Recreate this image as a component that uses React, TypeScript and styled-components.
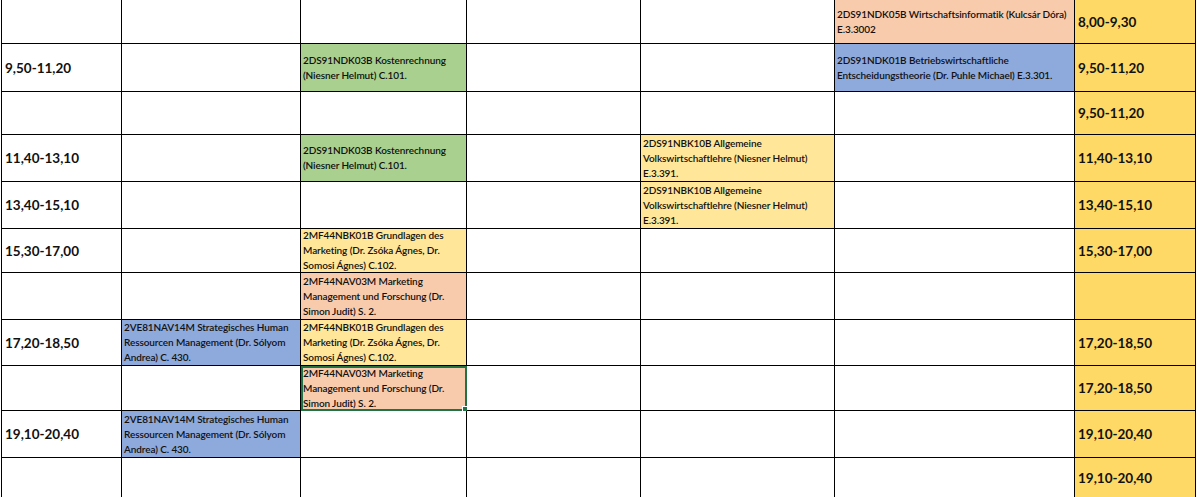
import React from "react";
import styled, { createGlobalStyle } from "styled-components";

const Global = createGlobalStyle`
  body { margin: 0; background: #fff; font-family: Lato, "Noto Sans", sans-serif; }
`;

type Fill = "green" | "peach" | "blue" | "yellow" | "gold" | "none";
const fills: Record<Fill, string> = {
  green: "#a9d08e", peach: "#f8cbad", blue: "#8ea9db", yellow: "#ffe699", gold: "#ffd966", none: "#fff",
};

const Grid = styled.div`
  display: grid;
  grid-template-columns: 120px 179px 166px 174px 194px 240px 121px;
  grid-template-rows: 44px 48px 43px 47px 47px 44px 47px 46px 45px 47px 40px;
  width: max-content;
  border-left: 1px solid #000;
  margin-left: 1px;
`;

const Cell = styled.div<{ $fill: Fill; $time?: boolean; $sel?: boolean }>`
  background: ${(p) => fills[p.$fill]};
  border-right: 1px solid #000;
  border-bottom: 1px solid #000;
  display: flex;
  align-items: center;
  padding: 0 ${(p) => (p.$time ? "3px" : "2px")};
  font-size: ${(p) => (p.$time ? "13.5px" : "10px")};
  font-weight: ${(p) => (p.$time ? 700 : 600)};
  line-height: ${(p) => (p.$time ? "16px" : "15px")};
  color: #111;
  letter-spacing: ${(p) => (p.$time ? "0" : "-0.1px")};
  position: relative;
  box-sizing: border-box;
  overflow: hidden;
  ${(p) => p.$sel && `outline: 2px solid #217346; outline-offset: -2px; overflow: visible;`}
`;

const Handle = styled.span`
  position: absolute;
  right: -3px;
  bottom: -3px;
  width: 5px;
  height: 5px;
  background: #217346;
  border: 1px solid #fff;
`;

const T = {
  wi: "2DS91NDK05B Wirtschaftsinformatik (Kulcsár Dóra) E.3.3002",
  kr: "2DS91NDK03B Kostenrechnung (Niesner Helmut) C.101.",
  bw: "2DS91NDK01B Betriebswirtschaftliche Entscheidungstheorie (Dr. Puhle Michael) E.3.301.",
  vw: "2DS91NBK10B Allgemeine Volkswirtschaftlehre (Niesner Helmut) E.3.391.",
  gm: "2MF44NBK01B Grundlagen des Marketing (Dr. Zsóka Ágnes, Dr. Somosi Ágnes) C.102.",
  mm: "2MF44NAV03M Marketing Management und Forschung (Dr. Simon Judit) S. 2.",
  hr: "2VE81NAV14M Strategisches Human Ressourcen Management (Dr. Sólyom Andrea) C. 430.",
};

type C = [string, Fill] | null;
const e: C = null;
const rows: { c: C[]; sel?: number }[] = [
  { c: [e, e, e, e, e, [T.wi, "peach"], ["8,00-9,30", "gold"]] },
  { c: [["9,50-11,20", "none"], e, [T.kr, "green"], e, e, [T.bw, "blue"], ["9,50-11,20", "gold"]] },
  { c: [e, e, e, e, e, e, ["9,50-11,20", "gold"]] },
  { c: [["11,40-13,10", "none"], e, [T.kr, "green"], e, [T.vw, "yellow"], e, ["11,40-13,10", "gold"]] },
  { c: [["13,40-15,10", "none"], e, e, e, [T.vw, "yellow"], e, ["13,40-15,10", "gold"]] },
  { c: [["15,30-17,00", "none"], e, [T.gm, "yellow"], e, e, e, ["15,30-17,00", "gold"]] },
  { c: [e, e, [T.mm, "peach"], e, e, e, ["", "gold"]] },
  { c: [["17,20-18,50", "none"], [T.hr, "blue"], [T.gm, "yellow"], e, e, e, ["17,20-18,50", "gold"]] },
  { c: [e, e, [T.mm, "peach"], e, e, e, ["17,20-18,50", "gold"]], sel: 2 },
  { c: [["19,10-20,40", "none"], [T.hr, "blue"], e, e, e, e, ["19,10-20,40", "gold"]] },
  { c: [e, e, e, e, e, e, ["19,10-20,40", "gold"]] },
];

export default function App() {
  return (
    <>
      <Global />
      <Grid>
        {rows.map((r, ri) =>
          r.c.map((c, ci) => {
            const time = ci === 0 || ci === 6;
            const sel = r.sel === ci;
            return (
              <Cell key={`${ri}-${ci}`} $fill={c ? c[1] : "none"} $time={time} $sel={sel}>
                {c ? c[0] : ""}
                {sel && <Handle />}
              </Cell>
            );
          })
        )}
      </Grid>
    </>
  );
}
